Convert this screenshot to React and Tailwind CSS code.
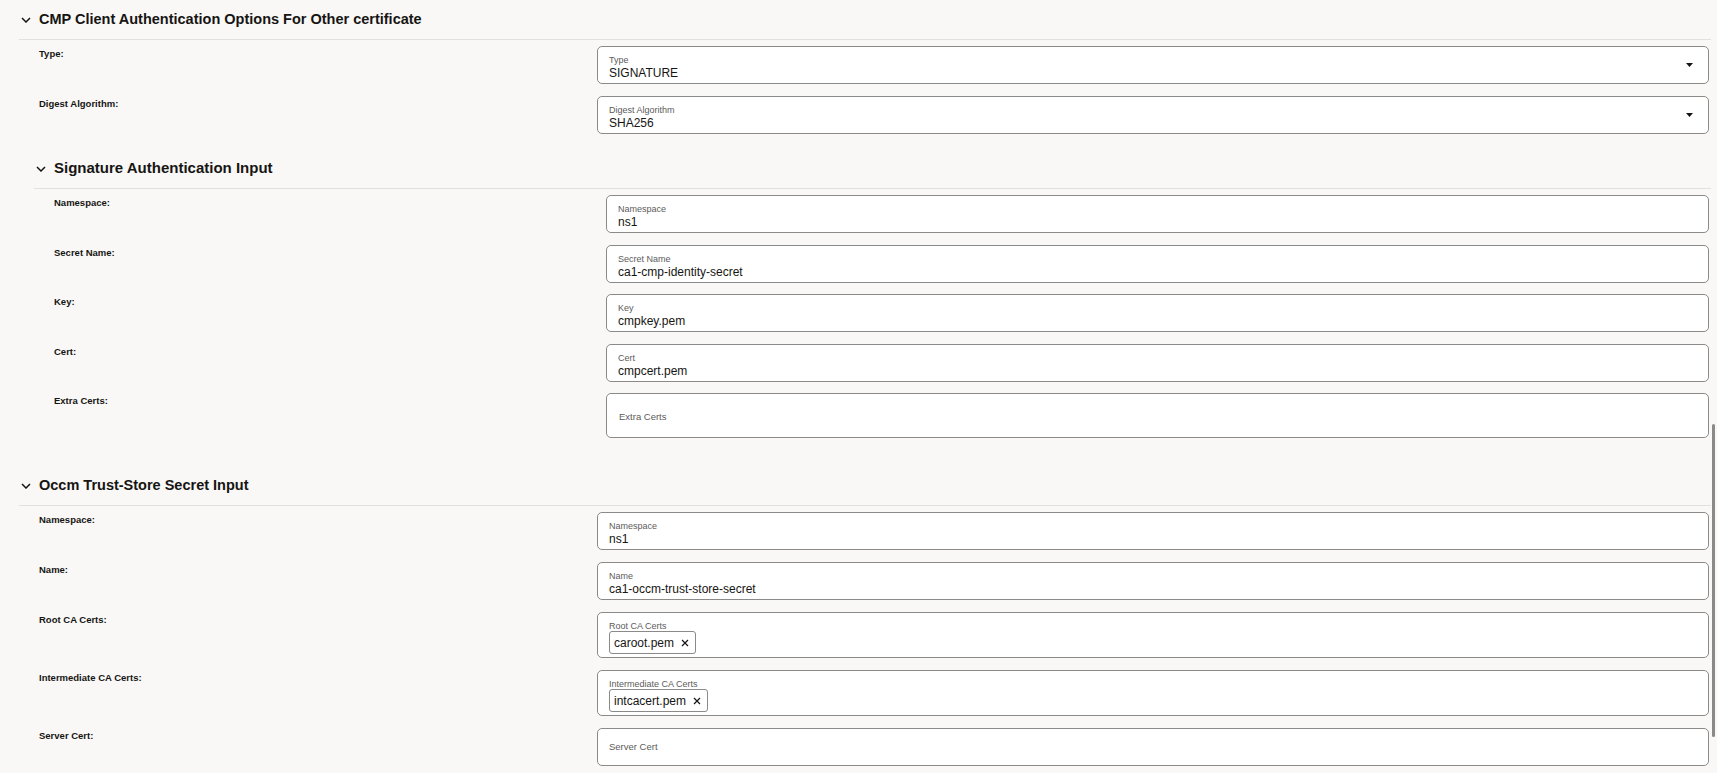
import React from 'react';

const Chevron = () => (
  <svg width="10" height="6" viewBox="0 0 10 6" fill="none" stroke="currentColor" strokeWidth="1.5">
    <path d="M1 1l4 4 4-4" />
  </svg>
);

const Caret = () => (
  <svg width="7" height="4" viewBox="0 0 7 4">
    <path d="M0 0h7L3.5 4z" fill="#161513" />
  </svg>
);

const Cross = () => (
  <svg width="8" height="8" viewBox="0 0 8 8" fill="none" stroke="#161513" strokeWidth="1.2">
    <path d="M1 1l6 6M7 1L1 7" />
  </svg>
);

const SectionHeader = ({ title, small }) => (
  <div className="flex h-[40px] items-center border-b border-[#e3e1de]">
    <div className="flex w-[20px] shrink-0 pl-[2px] text-[#161513]">
      <Chevron />
    </div>
    <h2 className={small ? 'text-[14.5px] font-bold text-[#161513]' : 'text-[15px] font-bold text-[#161513]'}>
      {title}
    </h2>
  </div>
);

const Label = ({ children }) => (
  <div className="pl-[20px] pt-[2px] text-[9.5px] font-bold leading-[12px] text-[#161513]">{children}</div>
);

const TextField = ({ label, value }) => (
  <div className="h-[38px] rounded-[5px] border border-[#8b8a89] bg-white pl-[11px] pt-[8px]">
    <div className="text-[9px] leading-[11px] text-[#5c5b5a]">{label}</div>
    <div className="text-[12px] leading-[14px] text-[#161513]">{value}</div>
  </div>
);

const SelectField = ({ label, value }) => (
  <div className="flex h-[38px] rounded-[5px] border border-[#8b8a89] bg-white pl-[11px] pr-[15px]">
    <div className="flex-1 pt-[8px]">
      <div className="text-[9px] leading-[11px] text-[#5c5b5a]">{label}</div>
      <div className="text-[12px] leading-[14px] text-[#161513]">{value}</div>
    </div>
    <div className="flex items-center">
      <Caret />
    </div>
  </div>
);

const ChipField = ({ label, chips }) => (
  <div className="rounded-[5px] border border-[#8b8a89] bg-white pb-[3px] pl-[11px] pt-[8px]">
    <div className="text-[9px] leading-[10px] text-[#5c5b5a]">{label}</div>
    <div className="flex gap-1">
      {chips.map((c) => (
        <span
          key={c}
          className="flex h-[23px] items-center gap-[7px] rounded-[3px] border border-[#8b8a89] pl-[4px] pr-[6px] text-[12px] text-[#161513]"
        >
          {c}
          <Cross />
        </span>
      ))}
    </div>
  </div>
);

const EmptyField = ({ label, tall }) => (
  <div
    className={
      tall
        ? 'flex h-[45px] items-center rounded-[5px] border border-[#8b8a89] bg-white pl-[12px] pt-[3px] text-[9.5px] text-[#5c5b5a]'
        : 'flex h-[38px] items-center rounded-[5px] border border-[#8b8a89] bg-white pl-[11px] text-[9.5px] text-[#5c5b5a]'
    }
  >
    {label}
  </div>
);

export default function App() {
  return (
    <div className="relative h-screen overflow-hidden bg-[#f9f8f6] pl-[19px] pr-[6px] font-['Liberation_Sans',Arial,sans-serif]">
      {/* CMP client authentication */}
      <section>
        <SectionHeader title="CMP Client Authentication Options For Other certificate" small />
        <div className="grid grid-cols-[578px_1fr] gap-y-[12px] pr-[2px] pt-[6px]">
          <Label>Type:</Label>
          <SelectField label="Type" value="SIGNATURE" />
          <Label>Digest Algorithm:</Label>
          <SelectField label="Digest Algorithm" value="SHA256" />
        </div>

        {/* Signature authentication */}
        <section className="ml-[15px] mt-[15px]">
          <SectionHeader title="Signature Authentication Input" />
          <div className="grid grid-cols-[572px_1fr] gap-y-[11.5px] pr-[2px] pt-[6px]">
            <Label>Namespace:</Label>
            <TextField label="Namespace" value="ns1" />
            <Label>Secret Name:</Label>
            <TextField label="Secret Name" value="ca1-cmp-identity-secret" />
            <Label>Key:</Label>
            <TextField label="Key" value="cmpkey.pem" />
            <Label>Cert:</Label>
            <TextField label="Cert" value="cmpcert.pem" />
            <Label>Extra Certs:</Label>
            <EmptyField label="Extra Certs" tall />
          </div>
        </section>
      </section>

      {/* Trust store */}
      <section className="mt-[28px]">
        <SectionHeader title="Occm Trust-Store Secret Input" small />
        <div className="grid grid-cols-[578px_1fr] gap-y-[12px] pr-[2px] pt-[6px]">
          <Label>Namespace:</Label>
          <TextField label="Namespace" value="ns1" />
          <Label>Name:</Label>
          <TextField label="Name" value="ca1-occm-trust-store-secret" />
          <Label>Root CA Certs:</Label>
          <ChipField label="Root CA Certs" chips={['caroot.pem']} />
          <Label>Intermediate CA Certs:</Label>
          <ChipField label="Intermediate CA Certs" chips={['intcacert.pem']} />
          <Label>Server Cert:</Label>
          <EmptyField label="Server Cert" />
        </div>
      </section>

      {/* overlay scrollbar thumb */}
      <div className="absolute right-[2px] top-[424px] h-[313px] w-[3px] rounded-full bg-[#8b8a89]" />
    </div>
  );
}
